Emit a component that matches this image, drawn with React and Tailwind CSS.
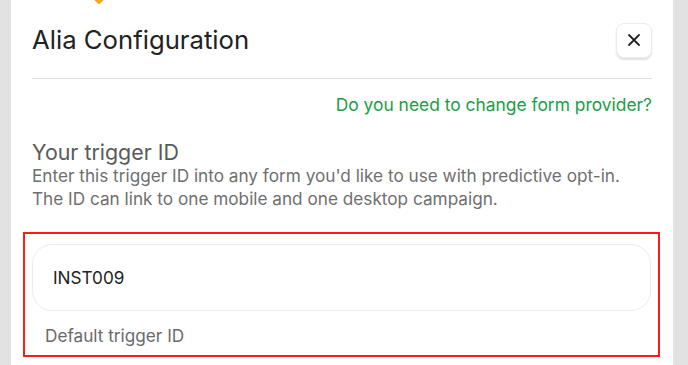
import React from 'react';

export default function App() {
  return (
    <div
      className="h-[365px] w-[688px] bg-[#e2e2e2] flex overflow-hidden"
      style={{ fontFamily: 'Inter, "Open Sans", sans-serif' }}
    >
      <div className="relative ml-[11px] mr-[15px] flex-1 bg-white px-[21px]">
        {/* orange tip of an icon cut off at the top */}
        <div className="absolute left-[84px] top-[-5px] h-[8px] w-[8px] rotate-45 rounded-[2px] bg-[#f5a623]"></div>

        <div className="flex items-center justify-between pt-[22px] pb-[20px] border-b border-[#e4e2de]">
          <h1 className="text-[25.7px] leading-[36px] text-[#222]">Alia Configuration</h1>
          <button className="flex h-[35px] w-[36px] items-center justify-center rounded-[8px] border border-[#ececec] bg-white shadow-[0_2px_2px_rgba(0,0,0,0.12)]">
            <svg width="14" height="14" viewBox="0 0 14 14" fill="none" stroke="#222" strokeWidth="1.8" strokeLinecap="round">
              <path d="M2 2 L12 12 M12 2 L2 12" />
            </svg>
          </button>
        </div>

        <div className="mt-[14px] flex justify-end">
          <a className="text-[17.4px] leading-[24px] text-[#1a9e45]">Do you need to change form provider?</a>
        </div>

        <h2 className="mt-[23px] text-[21.4px] leading-[24px] text-[#5a5a5a]">Your trigger ID</h2>
        <p className="text-[17.2px] leading-[23px] text-[#6f6f6f]">
          Enter this trigger ID into any form you'd like to use with predictive opt-in.
          <br />
          The ID can link to one mobile and one desktop campaign.
        </p>

        <div className="mt-[22px] -ml-[9px] -mr-[8px] border-2 border-[#ff1a1a] px-[7px] pt-[10px] pb-[7px]">
          <div className="flex h-[67px] items-center rounded-[20px] border border-[#eeece8] pl-[20px] text-[17.2px] text-[#222]">
            INST009
          </div>
          <div className="mt-[13px] pl-[13px] text-[17.2px] leading-[24px] text-[#6a6a6a]">Default trigger ID</div>
        </div>
      </div>
    </div>
  );
}
